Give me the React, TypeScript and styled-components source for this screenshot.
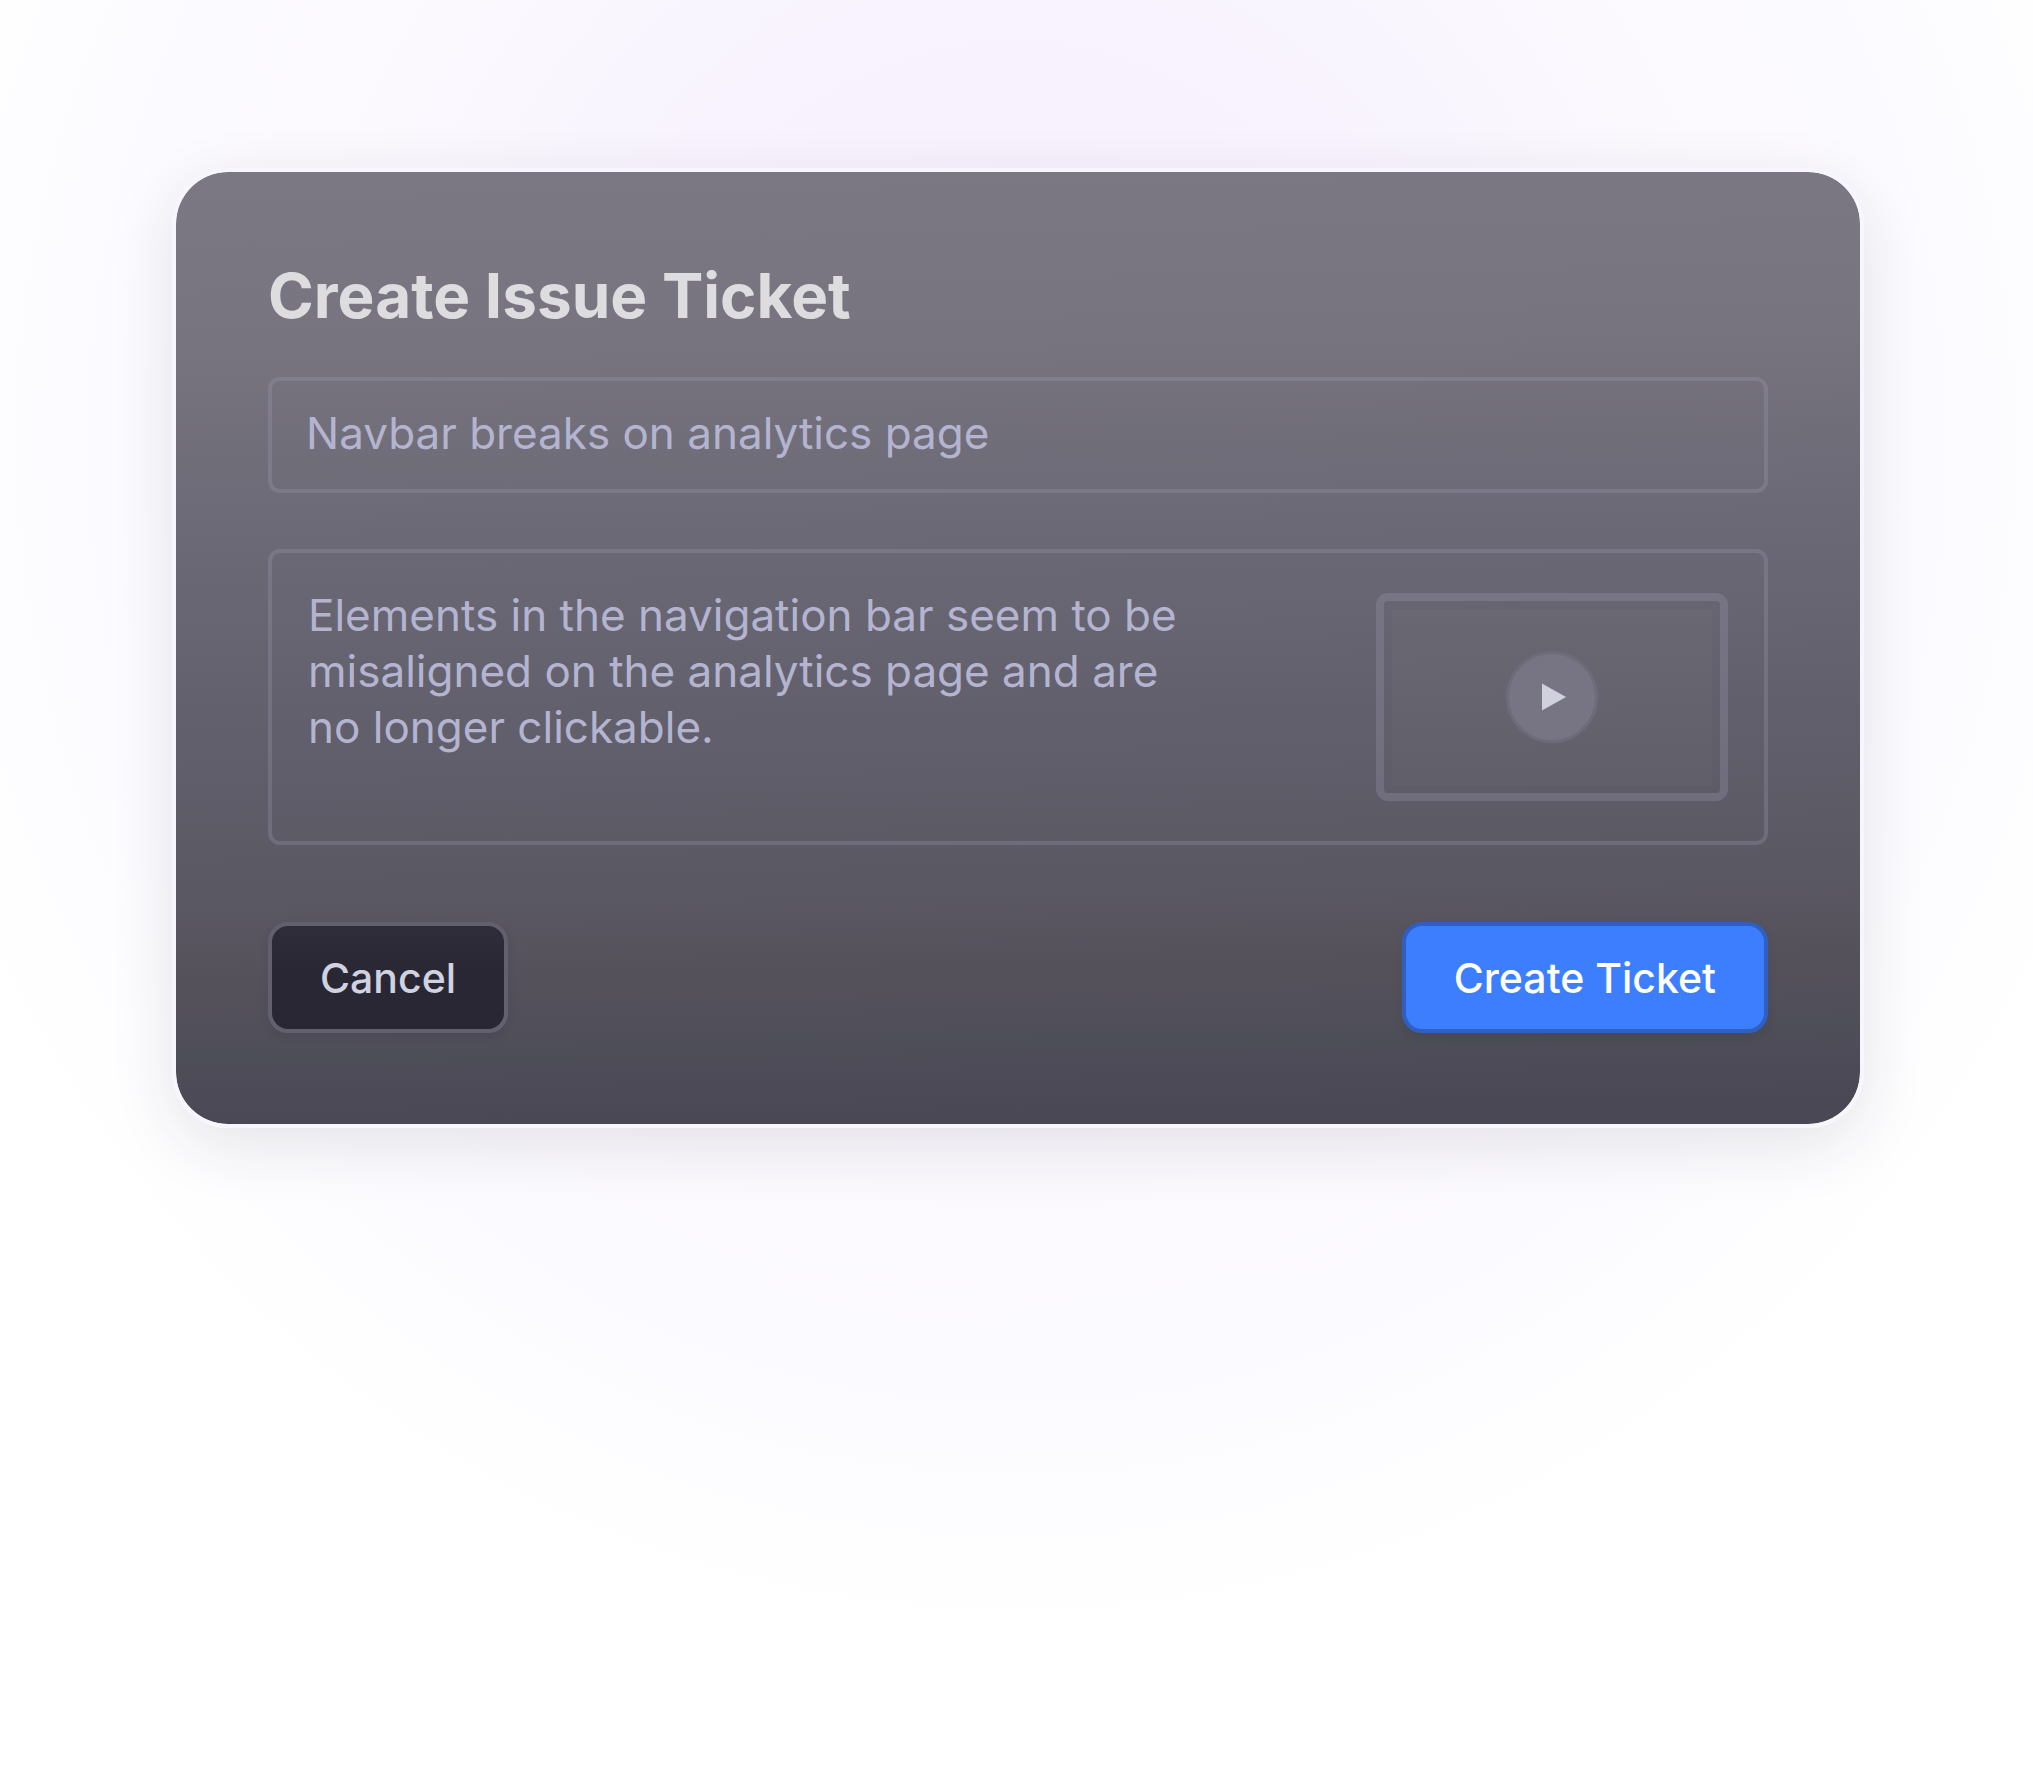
import React from "react";
import styled, { createGlobalStyle } from "styled-components";

const GlobalStyle = createGlobalStyle`
  *, *::before, *::after { box-sizing: border-box; }
  body {
    margin: 0;
    background: #ffffff;
    font-family: Inter, "Liberation Sans", sans-serif;
  }
`;

const outline = "rgba(160, 158, 182, 0.28)";

const Page = styled.main`
  min-height: 100vh;
  padding: 168px 169px 168px 172px;
  background: radial-gradient(
    1160px 1200px at 50% 440px,
    #f5effe 0%,
    #f8f3fe 36%,
    #fbf9fe 62%,
    #fcfbff 82%,
    #ffffff 100%
  );
`;

const Card = styled.form`
  padding: 84px 92px 91px;
  border: 4px solid #f7f5fd;
  border-radius: 56px;
  background: linear-gradient(
    179deg,
    #7b7883 0%,
    #787580 16%,
    #6c6a76 36%,
    #62606c 56%,
    #5a5863 74%,
    #55515b 83%,
    #4e4e59 90%,
    #4b4855 97%
  ) padding-box;
  box-shadow: 0 18px 64px rgba(40, 34, 50, 0.11);
`;

const Title = styled.h1`
  margin: 0 0 41px;
  font-size: 62px;
  line-height: 80px;
  font-weight: 700;
  color: #dddde0;
`;

const SummaryInput = styled.input`
  display: block;
  width: 100%;
  height: 116px;
  padding: 0 34px 4px;
  border: 4px solid ${outline};
  border-radius: 12px;
  outline: none;
  background: transparent;
  font: 400 44px/56px Inter, "Liberation Sans", sans-serif;
  color: #b4b4d0;
`;

const DetailsBox = styled.div`
  display: flex;
  justify-content: space-between;
  min-height: 296px;
  margin-top: 56px;
  padding: 0 36px;
  border: 4px solid ${outline};
  border-radius: 12px;
`;

const DetailsInput = styled.textarea`
  flex: 1;
  max-width: 888px;
  margin: 34px 0 0;
  padding: 0;
  border: 0;
  outline: none;
  resize: none;
  overflow: hidden;
  background: transparent;
  font: 400 44px/56px Inter, "Liberation Sans", sans-serif;
  color: #b4b4d0;
`;

const Thumbnail = styled.div`
  align-self: center;
  width: 352px;
  height: 208px;
  padding: 8px;
  border: 8px solid ${outline};
  border-radius: 12px;
`;

const Preview = styled.div`
  display: flex;
  align-items: center;
  justify-content: center;
  height: 100%;
  background: rgba(255, 255, 255, 0.02);
`;

const PlayButton = styled.button`
  display: flex;
  align-items: center;
  justify-content: center;
  width: 92px;
  height: 92px;
  padding: 0;
  border: 3px solid #6e6b7a;
  border-radius: 50%;
  background: #777583;
`;

const Actions = styled.div`
  display: flex;
  justify-content: space-between;
  margin-top: 77px;
`;

const Button = styled.button<{ $primary?: boolean }>`
  height: 111px;
  padding: 0 48px;
  border: 4px solid ${(p) => (p.$primary ? "#2f60bf" : "#625f6e")};
  border-radius: 20px;
  background: ${(p) =>
    p.$primary ? "#3d7eff" : "linear-gradient(#2e2d39, #282733 45%)"};
  font: 500 41px/56px Inter, "Liberation Sans", sans-serif;
  color: ${(p) => (p.$primary ? "#ffffff" : "#d0d2e0")};
  box-shadow: 0 4px 8px rgba(30, 25, 45, 0.1);
`;

export default function App() {
  return (
    <>
      <GlobalStyle />
      <Page>
        <Card onSubmit={(e) => e.preventDefault()}>
          <Title>Create Issue Ticket</Title>
          <SummaryInput
            aria-label="Issue title"
            defaultValue="Navbar breaks on analytics page"
          />
          <DetailsBox>
            <DetailsInput
              aria-label="Issue description"
              rows={3}
              spellCheck={false}
              defaultValue="Elements in the navigation bar seem to be misaligned on the analytics page and are no longer clickable."
            />
            <Thumbnail>
              <Preview>
                <PlayButton type="button" aria-label="Play recording">
                  <svg width="28" height="28" viewBox="0 0 28 28" aria-hidden="true">
                    <path d="M4 0.5 28 14 4 27.5Z" fill="#d0d1dd" />
                  </svg>
                </PlayButton>
              </Preview>
            </Thumbnail>
          </DetailsBox>
          <Actions>
            <Button type="button">Cancel</Button>
            <Button type="submit" $primary>
              Create Ticket
            </Button>
          </Actions>
        </Card>
      </Page>
    </>
  );
}
